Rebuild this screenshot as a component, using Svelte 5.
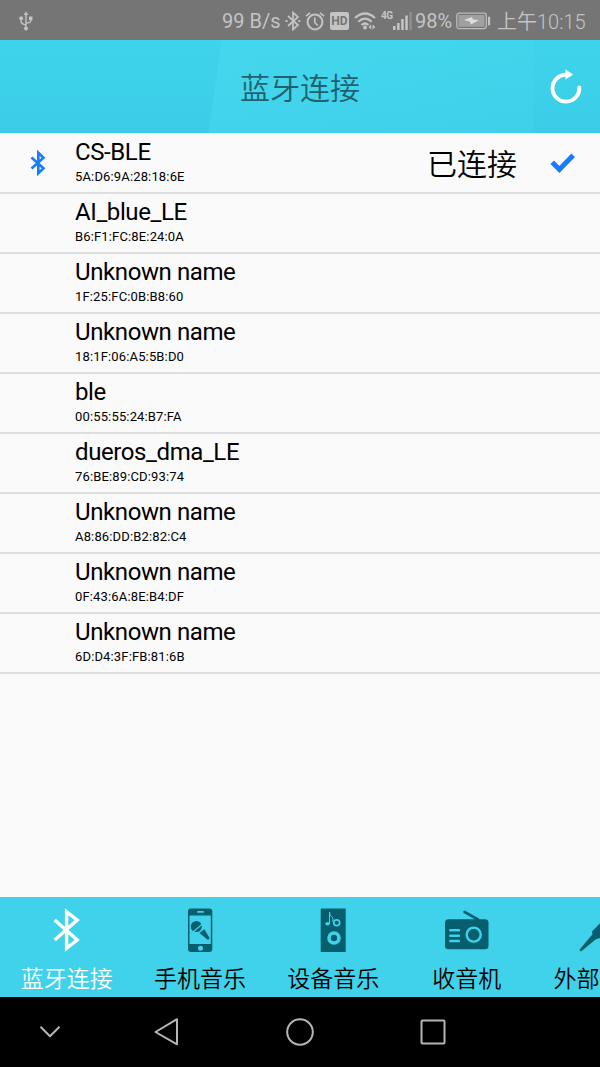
<script lang="ts">
	type Device = { name: string; mac: string; connected?: boolean };

	const devices: Device[] = [
		{ name: 'CS-BLE', mac: '5A:D6:9A:28:18:6E', connected: true },
		{ name: 'AI_blue_LE', mac: 'B6:F1:FC:8E:24:0A' },
		{ name: 'Unknown name', mac: '1F:25:FC:0B:B8:60' },
		{ name: 'Unknown name', mac: '18:1F:06:A5:5B:D0' },
		{ name: 'ble', mac: '00:55:55:24:B7:FA' },
		{ name: 'dueros_dma_LE', mac: '76:BE:89:CD:93:74' },
		{ name: 'Unknown name', mac: 'A8:86:DD:B2:82:C4' },
		{ name: 'Unknown name', mac: '0F:43:6A:8E:B4:DF' },
		{ name: 'Unknown name', mac: '6D:D4:3F:FB:81:6B' }
	];

	const tabs = [
		{ id: 'bluetooth', label: '蓝牙连接' },
		{ id: 'phone', label: '手机音乐' },
		{ id: 'speaker', label: '设备音乐' },
		{ id: 'radio', label: '收音机' },
		{ id: 'aux', label: '外部' }
	];

	let active = $state('bluetooth');
</script>

<div class="screen">
	<div class="status">
		<svg class="usb" width="14" height="20" viewBox="0 0 14 20">
			<path d="M7 3v14M2 7v3q0 3 5 4M12 7v2q0 3-5 3" fill="none" stroke="#c4c4c4" stroke-width="1.4" />
			<path d="M7 0.5l2.5 3.5h-5z" fill="#c4c4c4" />
			<circle cx="7" cy="17.5" r="2" fill="#c4c4c4" />
			<circle cx="2.2" cy="7.2" r="1.9" fill="#c4c4c4" />
			<rect x="10" y="5.5" width="3.5" height="3.5" fill="#c4c4c4" />
		</svg>
		<span class="speed">99 B/s</span>
		<svg class="bt" width="16" height="20" viewBox="0 0 16 20">
			<path d="M3 5l10 9-5 4.5v-17l5 4.5-10 9" fill="none" stroke="#c4c4c4" stroke-width="1.7" />
			<path d="M0.5 9h2v2h-2zM13.3 9h2v2h-2z" fill="#c4c4c4" />
		</svg>
		<svg class="alarm" width="20" height="20" viewBox="0 0 20 20">
			<circle cx="10" cy="11" r="7.4" fill="none" stroke="#c4c4c4" stroke-width="2" />
			<path d="M9.8 6.5v5l3 3M1 5.2l4-3.4M19 5.2l-4-3.4" fill="none" stroke="#c4c4c4" stroke-width="1.7" />
		</svg>
		<span class="hd">HD</span>
		<svg class="wifi" width="23" height="20" viewBox="0 0 23 20">
			<g fill="none" stroke="#c4c4c4" stroke-width="2.2">
				<path d="M1 7q10-9 20 0M4.3 10.7q6.7-6 13.4 0M7.5 14q3.5-3 7 0" />
			</g>
			<circle cx="11" cy="16.5" r="1.9" fill="#c4c4c4" />
			<path d="M17.2 13.5v5l-2.7-2.5zM18.6 13.5v5l2.7-2.5z" fill="#c4c4c4" />
		</svg>
		<span class="net">4G</span>
		<svg class="signal" width="19" height="20" viewBox="0 0 19 20">
			<path d="M0 15h2.5v4h-2.5zM4.1 12h2.5v7h-2.5zM8.2 8h2.5v11h-2.5zM12.3 4.5h2.5v14.5h-2.5z" fill="#c4c4c4" />
			<path d="M16.5 1h2.2v18h-2.2z" fill="#929292" />
		</svg>
		<span class="percent">98%</span>
		<svg class="battery" width="35" height="18" viewBox="0 0 35 18">
			<rect x="0.8" y="1.2" width="29.5" height="15.4" rx="2.5" fill="none" stroke="#bcbcbc" stroke-width="1.3" />
			<rect x="2.5" y="3" width="26" height="11.8" fill="#a0a0a0" />
			<path d="M8 8l8-3 1 2.5 6 .5-8 4.5-1-2.8z" fill="#dedede" />
			<rect x="32" y="4.5" width="2.2" height="9" rx="1" fill="#c4c4c4" />
		</svg>
		<span class="clock">上午10:15</span>
	</div>

	<header>
		<h1>蓝牙连接</h1>
		<button class="refresh" aria-label="refresh">
			<svg width="34" height="36" viewBox="0 0 34 36">
				<path d="M30.3 18.5A13.4 13.4 0 1 1 17 5.800" fill="none" stroke="#fff" stroke-width="3.9" stroke-linecap="round" />
				<path d="M16.5 0.500L24.200 5.500l-7.700 5z" fill="#fff" />
			</svg>
		</button>
	</header>

	<main>
		{#each devices as device}
			<div class="row">
				<div class="lead">
					{#if device.connected}
						<svg width="16" height="26" viewBox="0 0 16 26">
							<path d="M1.5 7.5L13.500 18.300l-5.200 5v-20.600l5.200 5L1.500 18.500" fill="none" stroke="#177dfc" stroke-width="2.6" />
						</svg>
					{/if}
				</div>
				<div class="info">
					<div class="name">{device.name}</div>
					<div class="mac">{device.mac}</div>
				</div>
				{#if device.connected}
					<span class="state">已连接</span>
					<svg class="check" width="26" height="22" viewBox="0 0 26 22">
						<path d="M2.2 10.3L9.4 17.5 23.2 3.3" fill="none" stroke="#177dfc" stroke-width="5" />
					</svg>
				{/if}
			</div>
		{/each}
	</main>

	<nav class="tabs">
		{#each tabs as tab}
			<button class="tab {tab.id}" class:active={active === tab.id} onclick={() => (active = tab.id)}>
				<svg width="48" height="48" viewBox="0 0 48 48">
					{#if tab.id === 'bluetooth'}
						<path d="M11.700 14L34.200 34 23.600 42.200V5.800L34.200 14 11.700 34" fill="none" stroke="currentColor" stroke-width="3.4" />
					{:else if tab.id === 'phone'}
						<rect x="12" y="2.5" width="24.3" height="43.5" rx="3" fill="#065e6e" />
						<rect x="13.5" y="9.5" width="21.3" height="28.5" fill="#3fd2ea" />
						<rect x="21" y="5" width="7" height="1.8" rx="0.9" fill="#3fd2ea" />
						<circle cx="24.5" cy="42.3" r="2.5" fill="#3fd2ea" />
						<circle cx="20.3" cy="20.5" r="5.5" fill="#065e6e" />
						<path d="M23.500 27L28.300 23.300 33.200 31.300V33.500H31.300z" fill="#065e6e" />
						<path d="M17 26L27 17.500" stroke="#3fd2ea" stroke-width="1.2" />
					{:else if tab.id === 'speaker'}
						<rect x="11.7" y="2.5" width="25" height="43.5" rx="0.5" fill="#065e6e" />
						<g fill="none" stroke="#3fd2ea">
							<circle cx="25" cy="32" r="5" stroke-width="3.6" />
							<circle cx="27.7" cy="16.7" r="2.9" stroke-width="1.7" />
							<path d="M20.5 17.5V6q0 4 3 5.500 1 2 0 4" stroke-width="1" />
						</g>
						<ellipse cx="18.5" cy="17.7" rx="2.3" ry="1.8" fill="#3fd2ea" />
					{:else if tab.id === 'radio'}
						<path d="M21.5 5.800L35 13.500" stroke="#065e6e" stroke-width="2.6" stroke-linecap="round" />
						<rect x="2" y="13.3" width="43.5" height="30" rx="3.5" fill="#065e6e" />
						<g fill="none" stroke="#3fd2ea" stroke-width="2.4" stroke-linecap="round">
							<path d="M7.3 24.300h8.600M7.300 29.700h8.600M7.300 35h8.600" />
							<circle cx="30.7" cy="28.6" r="7" />
						</g>
					{:else}
						<path d="M3.300 44L14.500 30.500 16.500 28.500 16 25.500 30 11l9 9L25 34l-1.500-2-4 1.500L5 45.500z" fill="#065e6e" />
					{/if}
				</svg>
				<span>{tab.label}</span>
			</button>
		{/each}
	</nav>

	<div class="sysbar">
		<svg class="hide" width="22" height="14" viewBox="0 0 22 14">
			<path d="M1.5 1.8L11 11.2 20.5 1.8" />
		</svg>
		<svg class="back" width="26" height="30" viewBox="0 0 26 30">
			<path d="M24 2.200V27.300L2.500 15z" />
		</svg>
		<svg class="home" width="30" height="30" viewBox="0 0 30 30">
			<circle cx="15" cy="15" r="12.8" />
		</svg>
		<svg class="recent" width="26" height="26" viewBox="0 0 26 26">
			<rect x="1.5" y="1.5" width="23" height="23" rx="1" />
		</svg>
	</div>
</div>

<style>
	:global(body) {
		margin: 0;
		background: #fafafa;
	}

	.screen {
		width: 600px;
		height: 1067px;
		display: flex;
		flex-direction: column;
		overflow: hidden;
		background: #fafafa;
		font-family: Roboto, 'Noto Sans CJK SC', sans-serif;
	}

	svg {
		display: block;
		flex: none;
	}

	button {
		border: 0;
		padding: 0;
		background: none;
		font-family: inherit;
		cursor: pointer;
	}

	.status {
		height: 40px;
		flex: none;
		box-sizing: border-box;
		padding: 1px 0 0 19px;
		display: flex;
		align-items: center;
		background: #757575;
		color: #c4c4c4;
		font-size: 20px;
		white-space: nowrap;
	}

	.speed {
		width: 63px;
		margin-left: 189px;
	}

	.alarm {
		margin-left: 4px;
	}

	.hd {
		width: 19px;
		height: 18px;
		margin-left: 5px;
		border-radius: 2px;
		background: #c4c4c4;
		color: #757575;
		font-size: 12px;
		font-weight: 700;
		line-height: 19px;
		text-align: center;
	}

	.wifi {
		margin-left: 5px;
	}

	.net {
		width: 12px;
		margin: 0 0 10px 4px;
		font-family: 'Liberation Sans Narrow', Roboto, sans-serif;
		font-size: 10px;
		font-weight: 700;
		letter-spacing: -0.5px;
	}

	.percent {
		width: 41px;
		margin-left: 3px;
	}

	.clock {
		margin-left: 6px;
		font-weight: 350;
	}

	header {
		height: 93px;
		flex: none;
		display: flex;
		align-items: center;
		justify-content: flex-end;
		padding-right: 17px;
		background:
			linear-gradient(98deg, transparent 219px, rgba(80, 225, 243, 0.3) 220px, rgba(80, 225, 243, 0.15) 100%) 0 0 / 533px 100% no-repeat,
			linear-gradient(#3ed3eb, #3bcde8);
	}

	h1 {
		flex: 1;
		margin: 4px 0 0;
		padding-left: 17px;
		color: #20626c;
		font-size: 30px;
		font-weight: 350;
		line-height: 44px;
		text-align: center;
	}

	.refresh {
		width: 34px;
		height: 36px;
		margin-left: -34px;
	}

	main {
		flex: 1;
		padding-top: 1px;
	}

	.row {
		height: 60px;
		box-sizing: border-box;
		padding-bottom: 2px;
		border-bottom: 2px solid #dedede;
		display: flex;
		align-items: center;
		color: #000;
	}

	.lead {
		width: 75px;
		padding-top: 1px;
		display: flex;
		justify-content: center;
	}

	.info {
		flex: 1;
	}

	.name {
		font-size: 24px;
		line-height: 28px;
		letter-spacing: -0.4px;
	}

	.mac {
		padding-top: 1px;
		font-size: 13px;
		line-height: 20px;
		letter-spacing: 0.15px;
	}

	.state {
		margin-top: 5px;
		font-size: 30px;
		font-weight: 350;
		line-height: 44px;
	}

	.check {
		margin: 2px 24px 0 33px;
	}

	.tabs {
		height: 100px;
		flex: none;
		display: flex;
		overflow: hidden;
		background: #3fd2ea;
	}

	.tab {
		width: 133.33px;
		flex: none;
		display: flex;
		flex-direction: column;
		align-items: center;
		padding-top: 9px;
		color: #000;
		font-size: 23px;
		font-weight: 350;
		line-height: 34px;
		white-space: nowrap;
	}

	.tab span {
		margin-top: 9px;
	}

	.aux span {
		width: 93px;
		text-align: left;
	}

	.tab.active {
		color: #fff;
	}

	.sysbar {
		height: 70px;
		flex: none;
		display: flex;
		align-items: center;
		background: #000;
	}

	.sysbar svg {
		fill: none;
		stroke: #b5b5b5;
		stroke-width: 2;
		stroke-linejoin: round;
	}

	.hide {
		margin-left: 39px;
	}

	.back {
		margin-left: 92px;
	}

	.home {
		margin-left: 106px;
	}

	.recent {
		margin-left: 105px;
	}
</style>
